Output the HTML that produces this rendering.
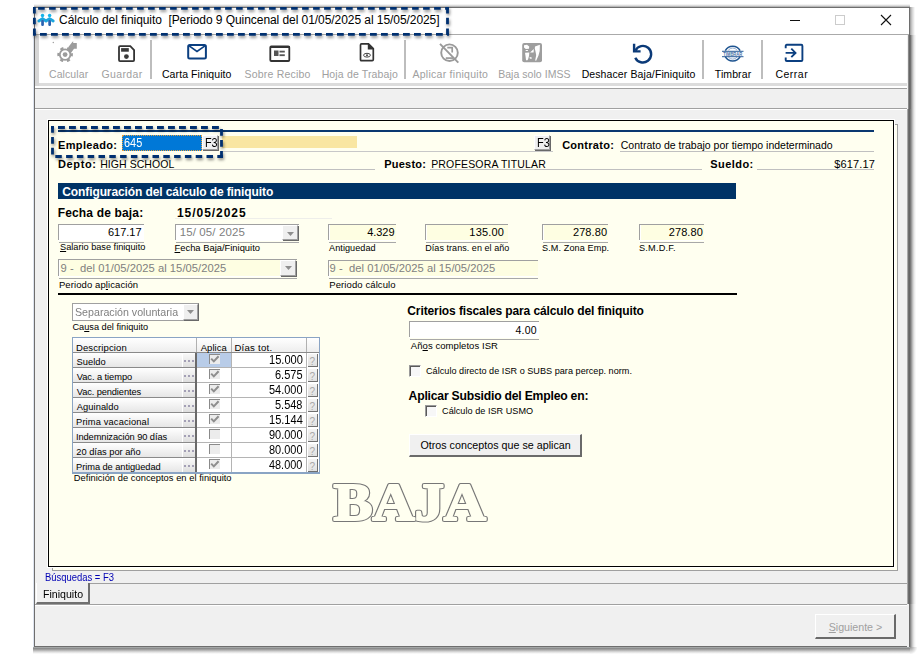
<!DOCTYPE html>
<html><head><meta charset="utf-8">
<style>
html,body{margin:0;padding:0;}
body{width:919px;height:657px;overflow:hidden;position:relative;background:#fff;font-family:"Liberation Sans",sans-serif;}
.t{position:absolute;white-space:nowrap;line-height:1;}
.r{position:absolute;box-sizing:border-box;}
svg{position:absolute;overflow:visible;}
</style></head><body>
<div class="r" style="left:34px;top:4px;width:876px;height:3px;background:linear-gradient(to bottom, rgba(255,255,255,0) 0%, rgba(200,200,200,0.7) 55%, #a4a4a4 100%);"></div>
<div class="r" style="left:910px;top:7px;width:5px;height:29px;background:linear-gradient(to right, #9a9a9a 0%, #cfcfcf 40%, rgba(255,255,255,0) 100%);"></div>
<div class="r" style="left:33px;top:647px;width:877px;height:7px;background:linear-gradient(to bottom, #b0b4b4 0%, #8c8c8c 22%, #a6a6a6 40%, #cfcfcf 62%, #efefef 85%, rgba(255,255,255,0) 100%);"></div>
<div class="r" style="left:33px;top:36px;width:1px;height:611px;background:#dde3ee;"></div>
<div class="r" style="left:910px;top:647px;width:8px;height:7px;background:radial-gradient(circle at 0 0, #8a8a8a 0px, #b0b0b0 2px, #d8d8d8 4.5px, rgba(255,255,255,0) 7.5px);"></div>
<div class="r" style="left:34px;top:7px;width:876px;height:640px;background:#f0f0f0;border:1px solid #6e6e6e;"></div>
<div class="r" style="left:35px;top:8px;width:874px;height:26px;background:#fff;"></div>
<div class="r" style="left:35px;top:34px;width:874px;height:1px;background:#aaaaaa;"></div>
<svg style="left:36px;top:12px" width="20" height="16" viewBox="0 0 20 16">
<path d="M2.9 9 L6.5 6.6 L10 9 L13.6 6.6 L17.2 9" stroke="#1ca6de" stroke-width="2.9" fill="none" stroke-linecap="round" stroke-linejoin="round"/>
<circle cx="6.5" cy="3.5" r="1.75" fill="#16b4ea"/><circle cx="13.6" cy="3.5" r="1.75" fill="#16b4ea"/>
<rect x="5.2" y="8" width="2.7" height="6" rx="1.2" fill="#2a62b0"/><rect x="12.3" y="8" width="2.7" height="6" rx="1.2" fill="#2a62b0"/>
</svg>
<div class="t" style="left:59.09px;top:14.04px;font-size:12.00px;letter-spacing:-0.062px;">Cálculo del finiquito&nbsp; [Periodo 9 Quincenal del 01/05/2025 al 15/05/2025]</div>
<div class="r" style="left:790px;top:20px;width:10px;height:1px;background:#111;"></div>
<div class="r" style="left:835px;top:15px;width:10px;height:10px;border:1px solid #cccccc;"></div>
<svg style="left:880px;top:14px" width="12" height="12" viewBox="0 0 12 12"><path d="M1 1 L11 11 M11 1 L1 11" stroke="#111" stroke-width="1.1"/></svg>
<div class="r" style="left:35px;top:35px;width:874px;height:53px;background:#fff;"></div>
<div class="r" style="left:35px;top:35px;width:4px;height:51px;background:#d6d6d6;"></div>
<div class="r" style="left:39px;top:83px;width:870px;height:3px;background:#dcdcdc;"></div>
<div class="r" style="left:35px;top:88px;width:874px;height:1px;background:#a0a0a0;"></div>
<div class="r" style="left:35px;top:89px;width:874px;height:19px;background:#f0f0f0;"></div>
<div class="r" style="left:35px;top:108px;width:874px;height:1px;background:#a0a0a0;"></div>
<div class="r" style="left:35px;top:109px;width:874px;height:1px;background:#ffffff;"></div>
<div class="r" style="left:150px;top:40px;width:2px;height:39px;background:#bdbdbd;"></div>
<div class="r" style="left:404px;top:40px;width:2px;height:39px;background:#bdbdbd;"></div>
<div class="r" style="left:702px;top:40px;width:2px;height:39px;background:#bdbdbd;"></div>
<div class="r" style="left:761px;top:40px;width:2px;height:39px;background:#bdbdbd;"></div>
<div class="t" style="left:48.96px;top:68.91px;font-size:10.50px;letter-spacing:0.099px;color:#a0a0a0;">Calcular</div>
<div class="t" style="left:101.47px;top:68.91px;font-size:10.50px;letter-spacing:0.363px;color:#a0a0a0;">Guardar</div>
<div class="t" style="left:161.96px;top:68.91px;font-size:10.50px;letter-spacing:0.085px;">Carta Finiquito</div>
<div class="t" style="left:244.53px;top:68.91px;font-size:10.50px;letter-spacing:0.209px;color:#a0a0a0;">Sobre Recibo</div>
<div class="t" style="left:321.64px;top:68.91px;font-size:10.50px;letter-spacing:0.155px;color:#a0a0a0;">Hoja de Trabajo</div>
<div class="t" style="left:412.48px;top:68.91px;font-size:10.50px;letter-spacing:0.266px;color:#a0a0a0;">Aplicar finiquito</div>
<div class="t" style="left:498.14px;top:68.91px;font-size:10.50px;letter-spacing:0.044px;color:#a0a0a0;">Baja solo IMSS</div>
<div class="t" style="left:581.64px;top:68.91px;font-size:10.50px;letter-spacing:0.106px;">Deshacer Baja/Finiquito</div>
<div class="t" style="left:714.77px;top:68.91px;font-size:10.50px;letter-spacing:0.104px;">Timbrar</div>
<div class="t" style="left:775.46px;top:68.91px;font-size:10.50px;letter-spacing:0.489px;">Cerrar</div>
<svg style="left:50px;top:38px" width="32" height="28" viewBox="0 0 32 28">
<g fill="#9c9c9c">
<circle cx="3.3" cy="4.5" r="0.7"/>
<path d="M18.2 9.2 L22.3 3.9 L23.2 3.2 L23.2 5 L26.8 5 L26.8 10.8 L24 10.8 L21.5 14.2 L20.5 15.5 L18.5 12 Z"/>
</g>
<circle cx="15.1" cy="16.6" r="5.3" fill="none" stroke="#9c9c9c" stroke-width="1.8"/>
<circle cx="15.1" cy="16.6" r="6.6" fill="none" stroke="#9c9c9c" stroke-width="2.4" stroke-dasharray="3.2 3.7" stroke-dashoffset="1.6"/>
<circle cx="15.1" cy="16.6" r="2.4" fill="#9c9c9c"/>
</svg>
<svg style="left:117px;top:44px" width="20" height="20" viewBox="0 0 20 20">
<path d="M3 2.2 H13.3 L17.1 6 V16.1 Q17.1 17.1 16.1 17.1 H3 Q2 17.1 2 16.1 V3.2 Q2 2.2 3 2.2 Z" fill="none" stroke="#333" stroke-width="1.8"/>
<rect x="4.1" y="4.1" width="7.7" height="3.6" fill="#3a3a3a"/><circle cx="9.4" cy="12.6" r="2.4" fill="#3a3a3a"/>
</svg>
<svg style="left:186px;top:43px" width="22" height="18" viewBox="0 0 22 18">
<rect x="2.2" y="2" width="17.7" height="13.6" rx="1.5" fill="none" stroke="#0b3f80" stroke-width="2"/>
<path d="M2.8 2.6 L11 8.4 L19.3 2.6" fill="none" stroke="#0b3f80" stroke-width="1.6"/>
</svg>
<svg style="left:268px;top:45px" width="24" height="18" viewBox="0 0 24 18">
<rect x="2.3" y="1.5" width="19" height="14.5" rx="1" fill="none" stroke="#333" stroke-width="1.8"/>
<rect x="2" y="1" width="20" height="2" fill="#333"/>
<rect x="6" y="5.5" width="4.5" height="5.5" fill="#555"/><rect x="11.5" y="5.7" width="5.3" height="1.8" fill="#555"/><rect x="11.5" y="9.3" width="5.3" height="1.8" fill="#555"/>
</svg>
<svg style="left:358px;top:42px" width="18" height="21" viewBox="0 0 18 21">
<path d="M3.5 1.8 H10.5 L15.3 6.6 V17.5 Q15.3 18.7 14.2 18.7 H3.5 Q2.5 18.7 2.5 17.5 V2.9 Q2.5 1.8 3.5 1.8 Z" fill="none" stroke="#333" stroke-width="1.7"/>
<path d="M10.5 2 V6.8 H15" fill="#333" stroke="#333" stroke-width="1.4"/>
<ellipse cx="9" cy="13.2" rx="3.4" ry="1.9" fill="none" stroke="#444" stroke-width="1"/><circle cx="9" cy="13.2" r="1" fill="#444"/>
</svg>
<svg style="left:438px;top:42px" width="22" height="23" viewBox="0 0 22 23">
<circle cx="11.5" cy="10.7" r="8.3" fill="none" stroke="#9a9a9a" stroke-width="1.9"/>
<path d="M9.3 5.6 H14.2 V10.6" fill="none" stroke="#9a9a9a" stroke-width="1.7"/>
<path d="M7.8 16.1 H15" fill="none" stroke="#9a9a9a" stroke-width="1.7"/>
<path d="M2 1.8 L20.3 20.6" stroke="#9a9a9a" stroke-width="1.9"/>
</svg>
<svg style="left:521px;top:42px" width="22" height="21" viewBox="0 0 22 21">
<rect x="1.2" y="1" width="19.8" height="19.3" rx="2" fill="#9e9e9e"/>
<path d="M3 3.2 L6 2.8 L8.2 4.5 L8 6.8 L4.8 7 L3 5.5 Z M4.7 7.9 H6.9 V9.1 H4.7 Z M4 10.8 L8.3 10.6 L8 14 L7 17.5 L6 18.4 L5 18 L4.5 14 Z M8.6 15 L10.8 15.4 L10.4 17 L8.8 16.6 Z M9 10.6 L12.8 6.9 L12.6 10.4 Z M14 4.5 L18.9 2.8 L18.7 9 L17.5 13.5 L15 18.9 L14.2 18.3 L15.2 13 L14.5 9.5 L13.8 6.5 Z" fill="#fff"/>
</svg>
<svg style="left:631px;top:42px" width="24" height="24" viewBox="0 0 24 24">
<path d="M4.4 8.6 A8.3 8.3 0 1 1 4.3 15.65" fill="none" stroke="#0b3a78" stroke-width="2.4"/>
<path d="M3.1 1.8 V9.4 H9.6" fill="none" stroke="#0b3a78" stroke-width="2.4" stroke-linejoin="miter"/>
</svg>
<svg style="left:720px;top:42px" width="26" height="23" viewBox="0 0 26 23">
<path d="M5.3 8.6 A8.4 8.4 0 0 1 20.1 8.6" fill="none" stroke="#1e5490" stroke-width="1.5"/>
<path d="M5.3 14.6 A8.4 8.4 0 0 0 20.1 14.6" fill="none" stroke="#1e5490" stroke-width="1.5"/>
<path d="M8.3 8.2 A5.6 5.6 0 0 1 17.1 8.2 M8.3 15 A5.6 5.6 0 0 0 17.1 15" fill="none" stroke="#7d9cc4" stroke-width="0.8"/>
<path d="M2 9.3 H23.5 M2 14.7 H23.5" stroke="#2a5d98" stroke-width="1"/>
<text x="12.8" y="13.6" font-size="4.6" font-family="Liberation Sans" font-weight="bold" fill="#4a72a6" text-anchor="middle" textLength="19" lengthAdjust="spacingAndGlyphs">TIMBRAR</text>
</svg>
<svg style="left:783px;top:43px" width="22" height="21" viewBox="0 0 22 21">
<path d="M2.7 5.2 V2.9 Q2.7 1.8 3.8 1.8 H18.3 Q19.4 1.8 19.4 2.9 V16.9 Q19.4 18 18.3 18 H3.8 Q2.7 18 2.7 16.9 V14.6" fill="none" stroke="#0b3f80" stroke-width="1.9"/>
<path d="M2.6 9.9 H12.5 M8.3 5.7 L12.5 9.9 L8.3 14.1" fill="none" stroke="#0b3f80" stroke-width="1.9"/>
</svg>
<div class="r" style="left:52px;top:124px;width:846px;height:447px;background:#fffff0;border:1px solid #a0a0a0;"></div>
<div class="r" style="left:47px;top:119px;width:848px;height:449px;border:1px solid #fff;"></div>
<div class="r" style="left:48px;top:120px;width:846px;height:447px;background:#fffff0;border:1px solid #000;"></div>
<div class="r" style="left:58px;top:130px;width:816px;height:2px;background:#0a3870;"></div>
<div class="t" style="left:58.06px;top:139.89px;font-size:11.00px;letter-spacing:0.345px;font-weight:bold;">Empleado:</div>
<div class="r" style="left:122px;top:135px;width:80px;height:16px;background:#0078d7;border:1px dotted #e8a040;"></div>
<div class="t" style="left:124.34px;top:136.92px;font-size:12.50px;color:#fff;transform:scaleX(0.8737);transform-origin:0 0;">645</div>
<div class="r" style="left:202px;top:135px;width:16px;height:15px;background:#f0f0f0;border-top:1px solid #fff;border-left:1px solid #fff;border-right:1px solid #a0a0a0;border-bottom:1px solid #a0a0a0;box-shadow:1px 1px 0 #696969;"></div>
<div class="t" style="left:205.01px;top:137.17px;font-size:12.20px;transform:scaleX(0.8897);transform-origin:0 0;">F3</div>
<div class="r" style="left:222px;top:136px;width:135px;height:12px;background:#f9e6a2;"></div>
<div class="r" style="left:222px;top:151px;width:331px;height:1px;background:#c8c8c8;"></div>
<div class="r" style="left:534px;top:135px;width:16px;height:15px;background:#f0f0f0;border-top:1px solid #fff;border-left:1px solid #fff;border-right:1px solid #a0a0a0;border-bottom:1px solid #a0a0a0;box-shadow:1px 1px 0 #696969;"></div>
<div class="t" style="left:536.80px;top:137.17px;font-size:12.20px;transform:scaleX(0.8976);transform-origin:0 0;">F3</div>
<div class="t" style="left:562.15px;top:139.69px;font-size:11.00px;letter-spacing:0.277px;font-weight:bold;">Contrato:</div>
<div class="t" style="left:620.76px;top:140.11px;font-size:10.50px;">Contrato de trabajo por tiempo indeterminado</div>
<div class="r" style="left:620px;top:151px;width:254px;height:1px;background:#c0c0c0;"></div>
<div class="t" style="left:58.06px;top:158.69px;font-size:11.00px;letter-spacing:0.613px;font-weight:bold;">Depto:</div>
<div class="t" style="left:100.14px;top:159.11px;font-size:10.50px;letter-spacing:0.070px;">HIGH SCHOOL</div>
<div class="r" style="left:100px;top:169px;width:275px;height:1px;background:#c0c0c0;"></div>
<div class="t" style="left:384.16px;top:158.99px;font-size:11.00px;letter-spacing:0.243px;font-weight:bold;">Puesto:</div>
<div class="t" style="left:431.14px;top:159.41px;font-size:10.50px;letter-spacing:0.176px;">PROFESORA TITULAR</div>
<div class="r" style="left:430px;top:169px;width:272px;height:1px;background:#c0c0c0;"></div>
<div class="t" style="left:710.28px;top:159.09px;font-size:11.00px;letter-spacing:0.440px;font-weight:bold;">Sueldo:</div>
<div class="r" style="left:757px;top:169px;width:117px;height:1px;background:#c0c0c0;"></div>
<div class="t" style="left:834.28px;top:159.09px;font-size:11.00px;letter-spacing:0.151px;">$617.17</div>
<div class="r" style="left:58px;top:183px;width:678px;height:16px;background:#003366;"></div>
<div class="t" style="left:62.26px;top:185.54px;font-size:12.00px;letter-spacing:-0.100px;font-weight:bold;color:#fff;">Configuración del cálculo de finiquito</div>
<div class="t" style="left:57.70px;top:206.84px;font-size:12.00px;letter-spacing:0.161px;font-weight:bold;">Fecha de baja:</div>
<div class="t" style="left:176.99px;top:206.84px;font-size:12.00px;letter-spacing:0.948px;font-weight:bold;">15/05/2025</div>
<div class="r" style="left:175px;top:218px;width:157px;height:1px;background:#eeeeea;"></div>
<div class="r" style="left:58px;top:224px;width:86px;height:17px;background:#ffffff;border-top:1px solid #a0a0a0;box-shadow:inset 2px 0 0 #fff, inset 0 -1px 0 #fff;"></div>
<div class="r" style="left:58px;top:224px;width:1px;height:16px;background:#a0a0a0;"></div>
<div class="r" style="left:59px;top:242px;width:85px;height:1px;background:#a8a8a8;"></div>
<div class="t" style="left:107.94px;top:227.09px;font-size:11.00px;letter-spacing:-0.005px;">617.17</div>
<div class="t" style="left:59.99px;top:243.41px;font-size:9.20px;"><u>S</u>alario base finiquito</div>
<div class="r" style="left:175px;top:224px;width:124px;height:17px;background:#ffffff;border-top:1px solid #a0a0a0;box-shadow:inset 2px 0 0 #fff, inset 0 -1px 0 #fff;"></div>
<div class="r" style="left:175px;top:224px;width:1px;height:16px;background:#a0a0a0;"></div>
<div class="r" style="left:176px;top:242px;width:123px;height:1px;background:#a8a8a8;"></div>
<div class="r" style="left:282px;top:225px;width:16px;height:15px;background:#efefef;border-left:1px solid #fff;border-top:1px solid #fff;border-right:1px solid #a0a0a0;border-bottom:1px solid #a0a0a0;box-shadow:1px 1px 0 #696969;"></div>
<svg style="left:287px;top:232px" width="8" height="5"><path d="M0 0 H7 L3.5 4 Z" fill="#8e8e8e"/></svg>
<div class="t" style="left:179.63px;top:227.27px;font-size:11.50px;letter-spacing:0.129px;color:#808080;">15/ 05/ 2025</div>
<div class="t" style="left:174.53px;top:243.44px;font-size:9.40px;"><u>F</u>echa Baja/Finiquito</div>
<div class="r" style="left:328px;top:224px;width:68px;height:17px;background:#fefee2;border-top:1px solid #a0a0a0;box-shadow:inset 2px 0 0 #fff, inset 0 -1px 0 #fff;"></div>
<div class="r" style="left:328px;top:224px;width:1px;height:16px;background:#a0a0a0;"></div>
<div class="r" style="left:329px;top:242px;width:67px;height:1px;background:#a8a8a8;"></div>
<div class="t" style="left:367.15px;top:227.19px;font-size:11.00px;letter-spacing:-0.038px;">4.329</div>
<div class="t" style="left:329.08px;top:243.60px;font-size:9.10px;letter-spacing:0.051px;">Antiguedad</div>
<div class="r" style="left:425px;top:224px;width:83px;height:17px;background:#fefee2;border-top:1px solid #a0a0a0;box-shadow:inset 2px 0 0 #fff, inset 0 -1px 0 #fff;"></div>
<div class="r" style="left:425px;top:224px;width:1px;height:16px;background:#a0a0a0;"></div>
<div class="r" style="left:426px;top:242px;width:82px;height:1px;background:#a8a8a8;"></div>
<div class="t" style="left:469.36px;top:227.19px;font-size:11.00px;letter-spacing:0.185px;">135.00</div>
<div class="t" style="left:425.26px;top:243.68px;font-size:9.00px;letter-spacing:0.049px;">Días trans. en el año</div>
<div class="r" style="left:542px;top:224px;width:66px;height:17px;background:#fefee2;border-top:1px solid #a0a0a0;box-shadow:inset 2px 0 0 #fff, inset 0 -1px 0 #fff;"></div>
<div class="r" style="left:542px;top:224px;width:1px;height:16px;background:#a0a0a0;"></div>
<div class="r" style="left:543px;top:242px;width:65px;height:1px;background:#a8a8a8;"></div>
<div class="t" style="left:572.95px;top:227.19px;font-size:11.00px;letter-spacing:0.088px;">278.80</div>
<div class="t" style="left:541.99px;top:243.60px;font-size:9.10px;letter-spacing:0.107px;">S.M. Zona Emp.</div>
<div class="r" style="left:639px;top:224px;width:65px;height:17px;background:#fefee2;border-top:1px solid #a0a0a0;box-shadow:inset 2px 0 0 #fff, inset 0 -1px 0 #fff;"></div>
<div class="r" style="left:639px;top:224px;width:1px;height:16px;background:#a0a0a0;"></div>
<div class="r" style="left:640px;top:242px;width:64px;height:1px;background:#a8a8a8;"></div>
<div class="t" style="left:668.75px;top:227.19px;font-size:11.00px;letter-spacing:0.088px;">278.80</div>
<div class="t" style="left:639.09px;top:243.51px;font-size:9.20px;letter-spacing:0.168px;">S.M.D.F.</div>
<div class="r" style="left:58px;top:259px;width:239px;height:18px;background:#fefee2;border-top:1px solid #a0a0a0;box-shadow:inset 2px 0 0 #fff, inset 0 -1px 0 #fff;"></div>
<div class="r" style="left:58px;top:259px;width:1px;height:17px;background:#a0a0a0;"></div>
<div class="r" style="left:59px;top:278px;width:238px;height:1px;background:#a8a8a8;"></div>
<div class="r" style="left:280px;top:260px;width:16px;height:16px;background:#efefef;border-left:1px solid #fff;border-top:1px solid #fff;border-right:1px solid #a0a0a0;border-bottom:1px solid #a0a0a0;box-shadow:1px 1px 0 #696969;"></div>
<svg style="left:285px;top:266px" width="8" height="5"><path d="M0 0 H7 L3.5 4 Z" fill="#8e8e8e"/></svg>
<div class="t" style="left:60.47px;top:263.22px;font-size:11.20px;letter-spacing:0.050px;color:#808080;">9 -&nbsp; del 01/05/2025 al 15/05/2025</div>
<div class="t" style="left:58.92px;top:279.66px;font-size:9.50px;letter-spacing:0.092px;">Periodo ap<u>l</u>icación</div>
<div class="r" style="left:328px;top:260px;width:210px;height:17px;background:#fefee2;border-top:1px solid #a0a0a0;box-shadow:inset 2px 0 0 #fff, inset 0 -1px 0 #fff;"></div>
<div class="r" style="left:328px;top:260px;width:1px;height:16px;background:#a0a0a0;"></div>
<div class="r" style="left:329px;top:278px;width:209px;height:1px;background:#a8a8a8;"></div>
<div class="t" style="left:329.47px;top:263.22px;font-size:11.20px;letter-spacing:0.050px;color:#808080;">9 -&nbsp; del 01/05/2025 al 15/05/2025</div>
<div class="t" style="left:329.22px;top:279.56px;font-size:9.50px;letter-spacing:0.102px;">Periodo cálculo</div>
<div class="r" style="left:58px;top:293px;width:679px;height:2px;background:#000;"></div>
<div class="r" style="left:72px;top:303px;width:127px;height:18px;background:#fff;border-top:1px solid #a0a0a0;border-left:1px solid #a0a0a0;border-bottom:1px solid #a0a0a0;border-right:1px solid #707070;"></div>
<div class="r" style="left:183px;top:304px;width:15px;height:16px;background:#efefef;border-left:1px solid #fff;border-top:1px solid #fff;border-right:1px solid #a0a0a0;border-bottom:1px solid #a0a0a0;box-shadow:1px 1px 0 #696969;"></div>
<svg style="left:187px;top:310px" width="8" height="5"><path d="M0 0 H7 L3.5 4 Z" fill="#8e8e8e"/></svg>
<div class="t" style="left:74.92px;top:307.47px;font-size:11.50px;color:#808080;transform:scaleX(0.9266);transform-origin:0 0;">Separación voluntaria</div>
<div class="t" style="left:72.43px;top:322.61px;font-size:9.20px;letter-spacing:0.009px;">Ca<u>u</u>sa del finiquito</div>
<div class="r" style="left:72px;top:337px;width:248px;height:137px;background:#fff;border:1px solid #8aa4c4;"></div>
<div class="r" style="left:73px;top:338px;width:246px;height:15px;background:linear-gradient(#ffffff,#ececec);"></div>
<div class="r" style="left:73px;top:352px;width:246px;height:1px;background:#8a8a8a;"></div>
<div class="r" style="left:196px;top:338px;width:1px;height:14px;background:#b0b0b0;"></div>
<div class="r" style="left:231px;top:338px;width:1px;height:14px;background:#b0b0b0;"></div>
<div class="r" style="left:306px;top:338px;width:1px;height:14px;background:#b0b0b0;"></div>
<div class="t" style="left:75.92px;top:342.66px;font-size:9.50px;letter-spacing:0.127px;">Descripcion</div>
<div class="t" style="left:200.78px;top:342.66px;font-size:9.50px;letter-spacing:0.008px;">Aplica</div>
<div class="t" style="left:234.41px;top:342.57px;font-size:9.60px;letter-spacing:0.239px;">Días tot.</div>
<div class="r" style="left:73px;top:353px;width:122px;height:15px;background:linear-gradient(#ffffff,#e6e6e6);border-bottom:1px solid #8a8a8a;"></div>
<div class="r" style="left:182px;top:354px;width:13px;height:13px;background:linear-gradient(#f8f8f8,#dedede);border-left:1px solid #fff;"></div>
<svg style="left:184px;top:360px" width="11" height="3"><path d="M0 1 h2 M4 1 h2 M8 1 h2" stroke="#8c86a4" stroke-width="1.7"/></svg>
<div class="r" style="left:195px;top:353px;width:2px;height:15px;background:#6a6a6a;"></div>
<div class="t" style="left:76.38px;top:357.83px;font-size:9.30px;letter-spacing:0.090px;">Sueldo</div>
<div class="r" style="left:197px;top:353px;width:34px;height:15px;background:#b8cce8;border-bottom:1px solid #b4b4b4;"></div>
<div class="r" style="left:209px;top:354px;width:11px;height:10px;background:#ececec;border-top:1px solid #8a8a8a;border-left:1px solid #8a8a8a;"></div>
<svg style="left:210px;top:355px" width="10" height="9"><path d="M1.2 3.6 L3.8 6.4 L8.6 1.2" fill="none" stroke="#8e8e8e" stroke-width="2"/></svg>
<div class="r" style="left:231px;top:353px;width:1px;height:15px;background:#b4b4b4;"></div>
<div class="r" style="left:232px;top:353px;width:74px;height:15px;background:#fff;border-bottom:1px solid #b4b4b4;"></div>
<div class="t" style="left:268.76px;top:354.04px;font-size:12.00px;transform:scaleX(0.9231);transform-origin:0 0;">15.000</div>
<div class="r" style="left:306px;top:353px;width:1px;height:15px;background:#b4b4b4;"></div>
<div class="r" style="left:307px;top:353px;width:12px;height:15px;background:#fff;"></div>
<div class="r" style="left:308px;top:354px;width:10px;height:13px;background:linear-gradient(#f4f4f4,#e0e0e0);border-right:1px solid #707070;border-bottom:1px solid #707070;"></div>
<div class="t" style="left:309.59px;top:357.24px;font-size:10.00px;color:#a8a8a8;">?</div>
<div class="r" style="left:73px;top:368px;width:122px;height:15px;background:linear-gradient(#ffffff,#e6e6e6);border-bottom:1px solid #8a8a8a;"></div>
<div class="r" style="left:182px;top:369px;width:13px;height:13px;background:linear-gradient(#f8f8f8,#dedede);border-left:1px solid #fff;"></div>
<svg style="left:184px;top:375px" width="11" height="3"><path d="M0 1 h2 M4 1 h2 M8 1 h2" stroke="#8c86a4" stroke-width="1.7"/></svg>
<div class="r" style="left:195px;top:368px;width:2px;height:15px;background:#6a6a6a;"></div>
<div class="t" style="left:76.76px;top:372.83px;font-size:9.30px;letter-spacing:-0.062px;">Vac. a tiempo</div>
<div class="r" style="left:197px;top:368px;width:34px;height:15px;background:#fff;border-bottom:1px solid #b4b4b4;"></div>
<div class="r" style="left:209px;top:369px;width:11px;height:10px;background:#ececec;border-top:1px solid #8a8a8a;border-left:1px solid #8a8a8a;"></div>
<svg style="left:210px;top:370px" width="10" height="9"><path d="M1.2 3.6 L3.8 6.4 L8.6 1.2" fill="none" stroke="#8e8e8e" stroke-width="2"/></svg>
<div class="r" style="left:231px;top:368px;width:1px;height:15px;background:#b4b4b4;"></div>
<div class="r" style="left:232px;top:368px;width:74px;height:15px;background:#fff;border-bottom:1px solid #b4b4b4;"></div>
<div class="t" style="left:275.14px;top:369.04px;font-size:12.00px;transform:scaleX(0.9167);transform-origin:0 0;">6.575</div>
<div class="r" style="left:306px;top:368px;width:1px;height:15px;background:#b4b4b4;"></div>
<div class="r" style="left:307px;top:368px;width:12px;height:15px;background:#fff;"></div>
<div class="r" style="left:308px;top:369px;width:10px;height:13px;background:linear-gradient(#f4f4f4,#e0e0e0);border-right:1px solid #707070;border-bottom:1px solid #707070;"></div>
<div class="t" style="left:309.59px;top:372.24px;font-size:10.00px;color:#a8a8a8;">?</div>
<div class="r" style="left:73px;top:383px;width:122px;height:15px;background:linear-gradient(#ffffff,#e6e6e6);border-bottom:1px solid #8a8a8a;"></div>
<div class="r" style="left:182px;top:384px;width:13px;height:13px;background:linear-gradient(#f8f8f8,#dedede);border-left:1px solid #fff;"></div>
<svg style="left:184px;top:390px" width="11" height="3"><path d="M0 1 h2 M4 1 h2 M8 1 h2" stroke="#8c86a4" stroke-width="1.7"/></svg>
<div class="r" style="left:195px;top:383px;width:2px;height:15px;background:#6a6a6a;"></div>
<div class="t" style="left:76.76px;top:387.83px;font-size:9.30px;letter-spacing:-0.117px;">Vac. pendientes</div>
<div class="r" style="left:197px;top:383px;width:34px;height:15px;background:#fff;border-bottom:1px solid #b4b4b4;"></div>
<div class="r" style="left:209px;top:384px;width:11px;height:10px;background:#ececec;border-top:1px solid #8a8a8a;border-left:1px solid #8a8a8a;"></div>
<svg style="left:210px;top:385px" width="10" height="9"><path d="M1.2 3.6 L3.8 6.4 L8.6 1.2" fill="none" stroke="#8e8e8e" stroke-width="2"/></svg>
<div class="r" style="left:231px;top:383px;width:1px;height:15px;background:#b4b4b4;"></div>
<div class="r" style="left:232px;top:383px;width:74px;height:15px;background:#fff;border-bottom:1px solid #b4b4b4;"></div>
<div class="t" style="left:269.16px;top:384.04px;font-size:12.00px;transform:scaleX(0.9119);transform-origin:0 0;">54.000</div>
<div class="r" style="left:306px;top:383px;width:1px;height:15px;background:#b4b4b4;"></div>
<div class="r" style="left:307px;top:383px;width:12px;height:15px;background:#fff;"></div>
<div class="r" style="left:308px;top:384px;width:10px;height:13px;background:linear-gradient(#f4f4f4,#e0e0e0);border-right:1px solid #707070;border-bottom:1px solid #707070;"></div>
<div class="t" style="left:309.59px;top:387.24px;font-size:10.00px;color:#a8a8a8;">?</div>
<div class="r" style="left:73px;top:398px;width:122px;height:15px;background:linear-gradient(#ffffff,#e6e6e6);border-bottom:1px solid #8a8a8a;"></div>
<div class="r" style="left:182px;top:399px;width:13px;height:13px;background:linear-gradient(#f8f8f8,#dedede);border-left:1px solid #fff;"></div>
<svg style="left:184px;top:405px" width="11" height="3"><path d="M0 1 h2 M4 1 h2 M8 1 h2" stroke="#8c86a4" stroke-width="1.7"/></svg>
<div class="r" style="left:195px;top:398px;width:2px;height:15px;background:#6a6a6a;"></div>
<div class="t" style="left:76.78px;top:402.83px;font-size:9.30px;letter-spacing:0.068px;">Aguinaldo</div>
<div class="r" style="left:197px;top:398px;width:34px;height:15px;background:#fff;border-bottom:1px solid #b4b4b4;"></div>
<div class="r" style="left:209px;top:399px;width:11px;height:10px;background:#ececec;border-top:1px solid #8a8a8a;border-left:1px solid #8a8a8a;"></div>
<svg style="left:210px;top:400px" width="10" height="9"><path d="M1.2 3.6 L3.8 6.4 L8.6 1.2" fill="none" stroke="#8e8e8e" stroke-width="2"/></svg>
<div class="r" style="left:231px;top:398px;width:1px;height:15px;background:#b4b4b4;"></div>
<div class="r" style="left:232px;top:398px;width:74px;height:15px;background:#fff;border-bottom:1px solid #b4b4b4;"></div>
<div class="t" style="left:275.26px;top:399.04px;font-size:12.00px;transform:scaleX(0.9129);transform-origin:0 0;">5.548</div>
<div class="r" style="left:306px;top:398px;width:1px;height:15px;background:#b4b4b4;"></div>
<div class="r" style="left:307px;top:398px;width:12px;height:15px;background:#fff;"></div>
<div class="r" style="left:308px;top:399px;width:10px;height:13px;background:linear-gradient(#f4f4f4,#e0e0e0);border-right:1px solid #707070;border-bottom:1px solid #707070;"></div>
<div class="t" style="left:309.59px;top:402.24px;font-size:10.00px;color:#a8a8a8;">?</div>
<div class="r" style="left:73px;top:413px;width:122px;height:15px;background:linear-gradient(#ffffff,#e6e6e6);border-bottom:1px solid #8a8a8a;"></div>
<div class="r" style="left:182px;top:414px;width:13px;height:13px;background:linear-gradient(#f8f8f8,#dedede);border-left:1px solid #fff;"></div>
<svg style="left:184px;top:420px" width="11" height="3"><path d="M0 1 h2 M4 1 h2 M8 1 h2" stroke="#8c86a4" stroke-width="1.7"/></svg>
<div class="r" style="left:195px;top:413px;width:2px;height:15px;background:#6a6a6a;"></div>
<div class="t" style="left:76.04px;top:417.83px;font-size:9.30px;letter-spacing:0.145px;">Prima vacacional</div>
<div class="r" style="left:197px;top:413px;width:34px;height:15px;background:#fff;border-bottom:1px solid #b4b4b4;"></div>
<div class="r" style="left:209px;top:414px;width:11px;height:10px;background:#ececec;border-top:1px solid #8a8a8a;border-left:1px solid #8a8a8a;"></div>
<svg style="left:210px;top:415px" width="10" height="9"><path d="M1.2 3.6 L3.8 6.4 L8.6 1.2" fill="none" stroke="#8e8e8e" stroke-width="2"/></svg>
<div class="r" style="left:231px;top:413px;width:1px;height:15px;background:#b4b4b4;"></div>
<div class="r" style="left:232px;top:413px;width:74px;height:15px;background:#fff;border-bottom:1px solid #b4b4b4;"></div>
<div class="t" style="left:268.76px;top:414.04px;font-size:12.00px;transform:scaleX(0.9200);transform-origin:0 0;">15.144</div>
<div class="r" style="left:306px;top:413px;width:1px;height:15px;background:#b4b4b4;"></div>
<div class="r" style="left:307px;top:413px;width:12px;height:15px;background:#fff;"></div>
<div class="r" style="left:308px;top:414px;width:10px;height:13px;background:linear-gradient(#f4f4f4,#e0e0e0);border-right:1px solid #707070;border-bottom:1px solid #707070;"></div>
<div class="t" style="left:309.59px;top:417.24px;font-size:10.00px;color:#a8a8a8;">?</div>
<div class="r" style="left:73px;top:428px;width:122px;height:15px;background:linear-gradient(#ffffff,#e6e6e6);border-bottom:1px solid #8a8a8a;"></div>
<div class="r" style="left:182px;top:429px;width:13px;height:13px;background:linear-gradient(#f8f8f8,#dedede);border-left:1px solid #fff;"></div>
<svg style="left:184px;top:435px" width="11" height="3"><path d="M0 1 h2 M4 1 h2 M8 1 h2" stroke="#8c86a4" stroke-width="1.7"/></svg>
<div class="r" style="left:195px;top:428px;width:2px;height:15px;background:#6a6a6a;"></div>
<div class="t" style="left:75.94px;top:432.83px;font-size:9.30px;letter-spacing:-0.093px;">Indemnización 90 días</div>
<div class="r" style="left:197px;top:428px;width:34px;height:15px;background:#fff;border-bottom:1px solid #b4b4b4;"></div>
<div class="r" style="left:209px;top:429px;width:11px;height:10px;background:#ececec;border-top:1px solid #8a8a8a;border-left:1px solid #8a8a8a;"></div>
<div class="r" style="left:231px;top:428px;width:1px;height:15px;background:#b4b4b4;"></div>
<div class="r" style="left:232px;top:428px;width:74px;height:15px;background:#fff;border-bottom:1px solid #b4b4b4;"></div>
<div class="t" style="left:269.08px;top:429.04px;font-size:12.00px;transform:scaleX(0.9141);transform-origin:0 0;">90.000</div>
<div class="r" style="left:306px;top:428px;width:1px;height:15px;background:#b4b4b4;"></div>
<div class="r" style="left:307px;top:428px;width:12px;height:15px;background:#fff;"></div>
<div class="r" style="left:308px;top:429px;width:10px;height:13px;background:linear-gradient(#f4f4f4,#e0e0e0);border-right:1px solid #707070;border-bottom:1px solid #707070;"></div>
<div class="t" style="left:309.59px;top:432.24px;font-size:10.00px;color:#a8a8a8;">?</div>
<div class="r" style="left:73px;top:443px;width:122px;height:15px;background:linear-gradient(#ffffff,#e6e6e6);border-bottom:1px solid #8a8a8a;"></div>
<div class="r" style="left:182px;top:444px;width:13px;height:13px;background:linear-gradient(#f8f8f8,#dedede);border-left:1px solid #fff;"></div>
<svg style="left:184px;top:450px" width="11" height="3"><path d="M0 1 h2 M4 1 h2 M8 1 h2" stroke="#8c86a4" stroke-width="1.7"/></svg>
<div class="r" style="left:195px;top:443px;width:2px;height:15px;background:#6a6a6a;"></div>
<div class="t" style="left:76.33px;top:447.83px;font-size:9.30px;letter-spacing:-0.020px;">20 días por año</div>
<div class="r" style="left:197px;top:443px;width:34px;height:15px;background:#fff;border-bottom:1px solid #b4b4b4;"></div>
<div class="r" style="left:209px;top:444px;width:11px;height:10px;background:#ececec;border-top:1px solid #8a8a8a;border-left:1px solid #8a8a8a;"></div>
<div class="r" style="left:231px;top:443px;width:1px;height:15px;background:#b4b4b4;"></div>
<div class="r" style="left:232px;top:443px;width:74px;height:15px;background:#fff;border-bottom:1px solid #b4b4b4;"></div>
<div class="t" style="left:269.13px;top:444.04px;font-size:12.00px;transform:scaleX(0.9129);transform-origin:0 0;">80.000</div>
<div class="r" style="left:306px;top:443px;width:1px;height:15px;background:#b4b4b4;"></div>
<div class="r" style="left:307px;top:443px;width:12px;height:15px;background:#fff;"></div>
<div class="r" style="left:308px;top:444px;width:10px;height:13px;background:linear-gradient(#f4f4f4,#e0e0e0);border-right:1px solid #707070;border-bottom:1px solid #707070;"></div>
<div class="t" style="left:309.59px;top:447.24px;font-size:10.00px;color:#a8a8a8;">?</div>
<div class="r" style="left:73px;top:458px;width:122px;height:15px;background:linear-gradient(#ffffff,#e6e6e6);border-bottom:1px solid #8a8a8a;"></div>
<div class="r" style="left:182px;top:459px;width:13px;height:13px;background:linear-gradient(#f8f8f8,#dedede);border-left:1px solid #fff;"></div>
<svg style="left:184px;top:465px" width="11" height="3"><path d="M0 1 h2 M4 1 h2 M8 1 h2" stroke="#8c86a4" stroke-width="1.7"/></svg>
<div class="r" style="left:195px;top:458px;width:2px;height:15px;background:#6a6a6a;"></div>
<div class="t" style="left:76.04px;top:462.83px;font-size:9.30px;letter-spacing:-0.065px;">Prima de antigüedad</div>
<div class="r" style="left:197px;top:458px;width:34px;height:15px;background:#fff;border-bottom:1px solid #b4b4b4;"></div>
<div class="r" style="left:209px;top:459px;width:11px;height:10px;background:#ececec;border-top:1px solid #8a8a8a;border-left:1px solid #8a8a8a;"></div>
<svg style="left:210px;top:460px" width="10" height="9"><path d="M1.2 3.6 L3.8 6.4 L8.6 1.2" fill="none" stroke="#8e8e8e" stroke-width="2"/></svg>
<div class="r" style="left:231px;top:458px;width:1px;height:15px;background:#b4b4b4;"></div>
<div class="r" style="left:232px;top:458px;width:74px;height:15px;background:#fff;border-bottom:1px solid #b4b4b4;"></div>
<div class="t" style="left:269.35px;top:459.04px;font-size:12.00px;transform:scaleX(0.9068);transform-origin:0 0;">48.000</div>
<div class="r" style="left:306px;top:458px;width:1px;height:15px;background:#b4b4b4;"></div>
<div class="r" style="left:307px;top:458px;width:12px;height:15px;background:#fff;"></div>
<div class="r" style="left:308px;top:459px;width:10px;height:13px;background:linear-gradient(#f4f4f4,#e0e0e0);border-right:1px solid #707070;border-bottom:1px solid #707070;"></div>
<div class="t" style="left:309.59px;top:462.24px;font-size:10.00px;color:#a8a8a8;">?</div>
<div class="r" style="left:72px;top:472px;width:248px;height:2px;background:#8aa4c4;"></div>
<div class="t" style="left:73.84px;top:474.33px;font-size:9.30px;letter-spacing:0.043px;">Definición de conceptos en el finiquito</div>
<div class="t" style="left:407.31px;top:305.44px;font-size:12.00px;letter-spacing:-0.110px;font-weight:bold;">Criterios fiscales para cálculo del finiquito</div>
<div class="r" style="left:409px;top:321px;width:130px;height:17px;background:#ffffff;border-top:1px solid #a0a0a0;box-shadow:inset 2px 0 0 #fff, inset 0 -1px 0 #fff;"></div>
<div class="r" style="left:409px;top:321px;width:1px;height:16px;background:#a0a0a0;"></div>
<div class="r" style="left:410px;top:339px;width:129px;height:1px;background:#a8a8a8;"></div>
<div class="t" style="left:515.56px;top:324.51px;font-size:10.50px;letter-spacing:0.173px;">4.00</div>
<div class="t" style="left:410.78px;top:341.36px;font-size:9.50px;letter-spacing:0.064px;">Añ<u>o</u>s completos ISR</div>
<div class="r" style="left:409px;top:365px;width:12px;height:12px;background:#f7f7f7;border-top:1px solid #9a9a9a;border-left:1px solid #9a9a9a;border-right:1px solid #fff;border-bottom:1px solid #fff;box-shadow:inset 1px 1px 0 #5a5a5a;"></div>
<div class="t" style="left:426.04px;top:366.70px;font-size:9.10px;letter-spacing:0.026px;">Cálculo directo de ISR o SUBS para percep. norm.</div>
<div class="t" style="left:408.59px;top:390.07px;font-size:12.20px;letter-spacing:-0.211px;font-weight:bold;">Aplicar Subsidio del Empleo en:</div>
<div class="r" style="left:425px;top:405px;width:12px;height:12px;background:#f7f7f7;border-top:1px solid #9a9a9a;border-left:1px solid #9a9a9a;border-right:1px solid #fff;border-bottom:1px solid #fff;box-shadow:inset 1px 1px 0 #5a5a5a;"></div>
<div class="t" style="left:442.04px;top:406.80px;font-size:9.10px;letter-spacing:0.032px;">Cálculo de ISR USMO</div>
<div class="r" style="left:409px;top:434px;width:173px;height:23px;background:#f0f0f0;border-top:1px solid #fff;border-left:1px solid #fff;border-right:2px solid #6a6a6a;border-bottom:2px solid #6a6a6a;"></div>
<div class="t" style="left:420.40px;top:440.34px;font-size:10.70px;letter-spacing:0.021px;">Otros conceptos que se aplican</div>
<svg style="left:320px;top:470px" width="180" height="60" viewBox="0 0 180 60">
<g font-family="Liberation Serif" font-weight="bold" font-size="52.3" text-anchor="start">
<text x="13.6" y="50.3" textLength="152.4" lengthAdjust="spacingAndGlyphs" fill="#777" stroke="#777" stroke-width="4.2" stroke-linejoin="round">BAJA</text>
<text x="13.6" y="50.3" textLength="152.4" lengthAdjust="spacingAndGlyphs" fill="#fffff0" stroke="#fffff0" stroke-width="2.1" stroke-linejoin="round">BAJA</text>
</g>
</svg>
<div class="t" style="left:44.73px;top:572.63px;font-size:10.00px;color:#0000b4;transform:scaleX(0.9431);transform-origin:0 0;">Búsquedas = F3</div>
<div class="r" style="left:89px;top:583px;width:819px;height:1px;background:#a0a0a0;"></div>
<div class="r" style="left:36px;top:583px;width:54px;height:21px;background:#f0f0f0;border-left:1px solid #fff;border-right:2px solid #707070;border-bottom:2px solid #707070;"></div>
<div class="t" style="left:42.88px;top:589.47px;font-size:11.50px;transform:scaleX(0.9217);transform-origin:0 0;">Finiquito</div>
<div class="r" style="left:35px;top:604px;width:874px;height:1px;background:#a0a0a0;"></div>
<div class="r" style="left:35px;top:605px;width:874px;height:1px;background:#fff;"></div>
<div class="r" style="left:815px;top:614px;width:81px;height:25px;background:#f0f0f0;border-top:1px solid #fff;border-left:1px solid #fff;border-right:2px solid #6a6a6a;border-bottom:2px solid #6a6a6a;"></div>
<div class="t" style="left:828.72px;top:621.64px;font-size:10.70px;letter-spacing:-0.034px;color:#a0a0a0;"><u>S</u>iguiente &gt;</div>
<div class="r" style="left:907px;top:35px;width:9px;height:74px;background:linear-gradient(to right, #f0f0f0 0px, #f0f0f0 1px, #8a8a8a 1px, #8a8a8a 2px, #666666 2px, #666666 3px, #707070 3px, #707070 4px, #9a9a9a 4px, #9a9a9a 5px, #bcbcbc 5px, #bcbcbc 6px, #d8d8d8 6px, #d8d8d8 7px, #ececec 7px, #ececec 8px, #f8f8f8 8px, #f8f8f8 9px);"></div>
<div class="r" style="left:907px;top:109px;width:9px;height:495px;background:linear-gradient(to right, #a8a8a8 0px, #a8a8a8 1px, #6e6e6e 1px, #6e6e6e 2px, #646464 2px, #646464 3px, #7a7a7a 3px, #7a7a7a 4px, #9a9a9a 4px, #9a9a9a 5px, #bcbcbc 5px, #bcbcbc 6px, #d8d8d8 6px, #d8d8d8 7px, #ececec 7px, #ececec 8px, #f8f8f8 8px, #f8f8f8 9px);"></div>
<div class="r" style="left:907px;top:604px;width:9px;height:43px;background:linear-gradient(to right, #f0f0f0 0px, #f0f0f0 1px, #f0f0f0 1px, #f0f0f0 2px, #6a6a6a 2px, #6a6a6a 3px, #8a8a8a 3px, #8a8a8a 4px, #acacac 4px, #acacac 5px, #cacaca 5px, #cacaca 6px, #e2e2e2 6px, #e2e2e2 7px, #f2f2f2 7px, #f2f2f2 8px, #fbfbfb 8px, #fbfbfb 9px);"></div>
<svg style="left:0;top:0;filter:drop-shadow(1px 2px 1.5px rgba(0,0,0,0.45))" width="919" height="657">
<g stroke="#003070" stroke-width="2.8" fill="none">
<path d="M34.4 7 V36" stroke-dasharray="6.4 4.4"/>
<path d="M447.5 7 V36" stroke-dasharray="6.4 4.4"/>
<path d="M33 8.4 H449" stroke-dasharray="6.6 4.4" stroke-dashoffset="5.9"/>
<path d="M33 34.4 H449" stroke-dasharray="6.8 4.2" stroke-dashoffset="4"/>
<path d="M52.5 126 V158" stroke-dasharray="6.8 4.1"/>
<path d="M221.5 126 V158" stroke-dasharray="6.6 4.4" stroke-dashoffset="7.9"/>
<path d="M51 127.5 H223" stroke-dasharray="6.9 4.1" stroke-dashoffset="4"/>
<path d="M51 156.5 H223" stroke-dasharray="6.5 4.3" stroke-dashoffset="6.5"/>
</g>
</svg>
</body></html>
